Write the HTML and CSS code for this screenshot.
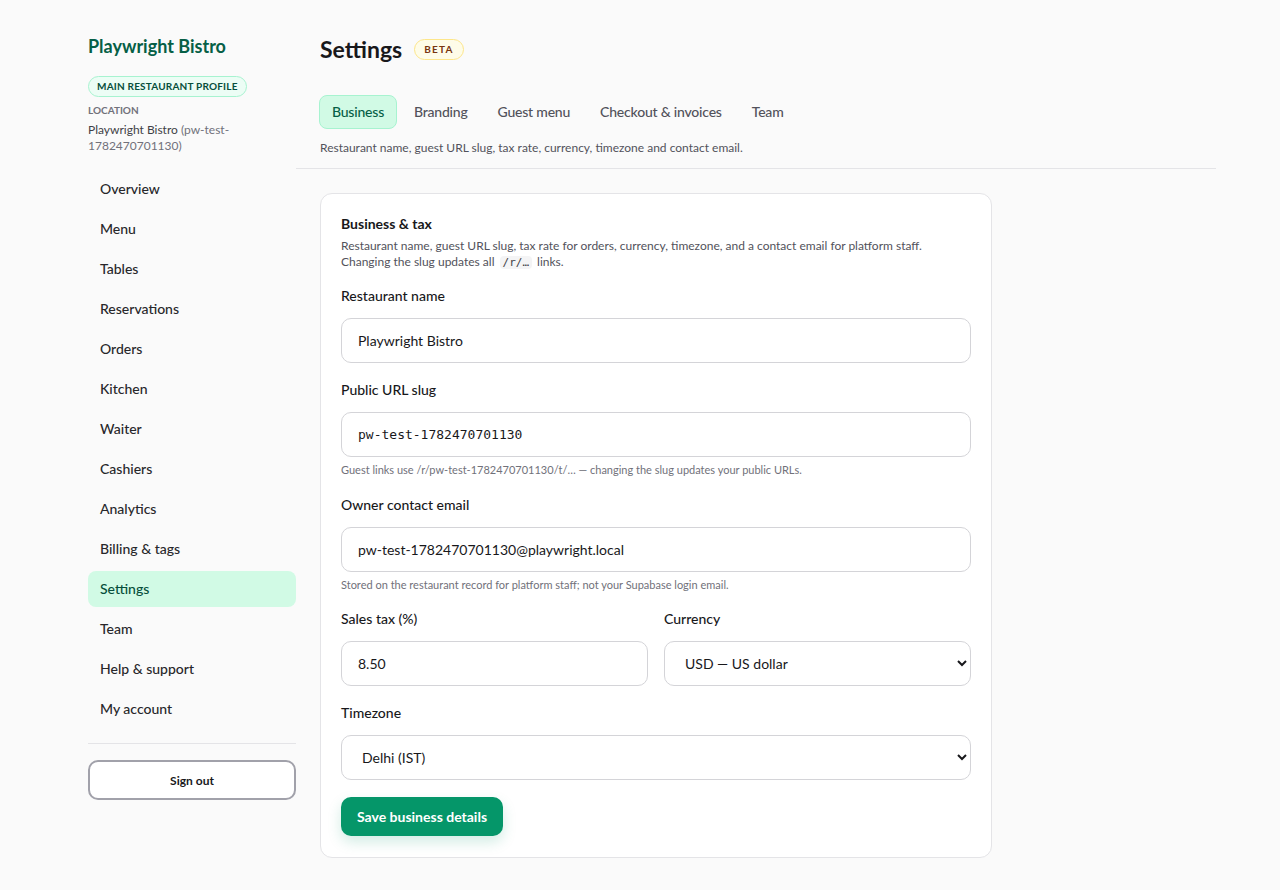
FILE: index.html
```html
<!DOCTYPE html>
<html lang="en">
<head>
  <meta charset="UTF-8" />
  <meta name="viewport" content="width=device-width, initial-scale=1" />
  <title>Settings · Playwright Bistro</title>
  <link rel="stylesheet" href="styles.css">
</head>
<body>

  <div class="layout">
    <aside class="sidebar">
      <div class="brand">Playwright Bistro</div>
      <span class="profile-badge">Main restaurant profile</span>
      <div class="loc-label">Location</div>
      <div class="loc-name">Playwright Bistro <span class="muted">(pw-test-1782470701130)</span></div>

      <nav class="nav">
        <a href="#">Overview</a>
        <a href="#">Menu</a>
        <a href="#">Tables</a>
        <a href="#">Reservations</a>
        <a href="#">Orders</a>
        <a href="#">Kitchen</a>
        <a href="#">Waiter</a>
        <a href="#">Cashiers</a>
        <a href="#">Analytics</a>
        <a href="#">Billing &amp; tags</a>
        <a href="#" class="active">Settings</a>
        <a href="#">Team</a>
        <a href="#">Help &amp; support</a>
        <a href="#">My account</a>
      </nav>

      <div class="sidebar-foot">
        <button class="signout">Sign out</button>
      </div>
    </aside>

    <main class="main">
      <header class="page-head">
        <div class="title-row">
          <h1>Settings</h1>
          <span class="beta">Beta</span>
        </div>
        <div class="tabs">
          <a href="#" class="tab active">Business</a>
          <a href="#" class="tab">Branding</a>
          <a href="#" class="tab">Guest menu</a>
          <a href="#" class="tab">Checkout &amp; invoices</a>
          <a href="#" class="tab">Team</a>
        </div>
        <p class="tab-desc">Restaurant name, guest URL slug, tax rate, currency, timezone and contact email.</p>
      </header>

      <section class="card">
        <h2>Business &amp; tax</h2>
        <p class="card-desc">Restaurant name, guest URL slug, tax rate for orders, currency, timezone, and a contact email for platform staff. Changing the slug updates all <code>/r/…</code> links.</p>

        <div class="field">
          <label for="name">Restaurant name</label>
          <input id="name" type="text" value="Playwright Bistro">
        </div>

        <div class="field">
          <label for="slug">Public URL slug</label>
          <input id="slug" class="mono" type="text" value="pw-test-1782470701130">
          <p class="hint">Guest links use /r/pw-test-1782470701130/t/… — changing the slug updates your public URLs.</p>
        </div>

        <div class="field">
          <label for="email">Owner contact email</label>
          <input id="email" type="email" value="pw-test-1782470701130@playwright.local">
          <p class="hint">Stored on the restaurant record for platform staff; not your Supabase login email.</p>
        </div>

        <div class="field-row">
          <div class="field">
            <label for="tax">Sales tax (%)</label>
            <input id="tax" type="text" value="8.50">
          </div>
          <div class="field">
            <label for="currency">Currency</label>
            <select id="currency">
              <option>USD — US dollar</option>
              <option>EUR — Euro</option>
              <option>INR — Indian rupee</option>
            </select>
          </div>
        </div>

        <div class="field">
          <label for="tz">Timezone</label>
          <select id="tz">
            <option>Delhi (IST)</option>
            <option>London (GMT)</option>
            <option>New York (EST)</option>
          </select>
        </div>

        <button class="save">Save business details</button>
      </section>
    </main>
  </div>

</body>
</html>
```

FILE: styles.css
```css
* {
  box-sizing: border-box;
}

body {
  margin: 0;
  font-family: Lato, "Noto Sans", sans-serif;
  background: #fafafa;
  color: #18181b;
}

a {
  text-decoration: none;
  color: inherit;
}

.layout {
  display: flex;
  padding: 34px 64px 32px 88px;
}

/* Sidebar */
.sidebar {
  width: 208px;
  flex: 0 0 208px;
  display: flex;
  flex-direction: column;
}

.brand {
  font-size: 18px;
  line-height: 24px;
  font-weight: 700;
  color: #065f46;
}

.profile-badge {
  align-self: flex-start;
  margin-top: 18px;
  padding: 3px 8px;
  font-size: 10px;
  line-height: 13px;
  font-weight: 700;
  text-transform: uppercase;
  letter-spacing: 0.02em;
  color: #064e3b;
  background: #ecfdf5;
  border: 1px solid #a7f3d0;
  border-radius: 999px;
}

.loc-label {
  margin-top: 6px;
  font-size: 10px;
  line-height: 14px;
  font-weight: 700;
  text-transform: uppercase;
  color: #71717a;
}

.loc-name {
  margin-top: 5px;
  font-size: 12px;
  line-height: 16px;
  color: #3f3f46;
}

.muted {
  color: #71717a;
}

.nav {
  margin-top: 17px;
  display: flex;
  flex-direction: column;
  gap: 4px;
}

.nav a {
  display: block;
  height: 36px;
  line-height: 36px;
  padding: 0 12px;
  font-size: 14px;
  font-weight: 500;
  color: #27272a;
  border-radius: 8px;
}

.nav a.active {
  background: #d1fae5;
  color: #064e3b;
}

.sidebar-foot {
  margin-top: 16px;
  padding-top: 16px;
  border-top: 1px solid #e4e4e7;
}

.signout {
  width: 100%;
  height: 40px;
  font-family: inherit;
  font-size: 12px;
  font-weight: 700;
  color: #18181b;
  background: #fff;
  border: 2px solid #a1a1aa;
  border-radius: 10px;
  cursor: pointer;
}

/* Main column */
.main {
  flex: 1;
  min-width: 0;
}

.page-head {
  padding: 1px 24px 12px;
  border-bottom: 1px solid #e4e4e7;
}

.title-row {
  display: flex;
  align-items: center;
  gap: 12px;
}

.title-row h1 {
  margin: 0;
  font-size: 23px;
  line-height: 28px;
  font-weight: 700;
  color: #18181b;
}

.beta {
  padding: 3px 9px;
  font-size: 10px;
  line-height: 13px;
  font-weight: 700;
  letter-spacing: 0.12em;
  text-transform: uppercase;
  color: #78350f;
  background: #fefce8;
  border: 1px solid #fde68a;
  border-radius: 999px;
}

.tabs {
  display: flex;
  gap: 4px;
  margin: 32px 0 0 -1px;
}

.tab {
  height: 34px;
  line-height: 32px;
  padding: 0 12px;
  font-size: 14px;
  font-weight: 500;
  letter-spacing: -0.015em;
  color: #52525b;
  border: 1px solid transparent;
  border-radius: 8px;
}

.tab.active {
  background: #d1fae5;
  border-color: #a7f3d0;
  color: #065f46;
}

.tab-desc {
  margin: 11px 0 0;
  font-size: 12px;
  line-height: 16px;
  color: #52525b;
}

/* Business card */
.card {
  margin: 24px 0 0 24px;
  width: 672px;
  padding: 20px 20px 21px;
  background: #fff;
  border: 1px solid #e4e4e7;
  border-radius: 12px;
}

.card h2 {
  margin: 0;
  font-size: 14px;
  line-height: 20px;
  font-weight: 700;
}

.card-desc {
  margin: 4px 0 0;
  font-size: 12px;
  line-height: 16px;
  color: #52525b;
}

.card-desc code {
  font-family: "DejaVu Sans Mono", monospace;
  font-size: 11px;
  margin: 0 2px;
  padding: 0 3px;
  background: #f4f4f5;
  border-radius: 4px;
  color: #3f3f46;
}

.field {
  display: flex;
  flex-direction: column;
}

/* vertical rhythm between the card's form blocks */
.card > .card-desc + .field {
  margin-top: 15px;
}

.card > .field + .field,
.card > .field-row + .field {
  margin-top: 17px;
}

.card > .field + .field-row {
  margin-top: 16px;
}

.field label {
  font-size: 14px;
  line-height: 20px;
  font-weight: 500;
  color: #18181b;
  margin-bottom: 12px;
}

.field input,
.field select {
  height: 45px;
  width: 100%;
  padding: 0 16px;
  font-family: inherit;
  font-size: 14px;
  color: #18181b;
  background: #fff;
  border: 1px solid #d4d4d8;
  border-radius: 10px;
  outline: none;
}

.field select {
  padding-right: 8px;
}

.field input.mono {
  font-family: "DejaVu Sans Mono", monospace;
  font-size: 13px;
}

.hint {
  margin: 5px 0 0;
  font-size: 11px;
  line-height: 16px;
  color: #71717a;
}

.field-row {
  display: grid;
  grid-template-columns: 1fr 1fr;
  gap: 16px;
}

.save {
  margin-top: 17px;
  height: 39px;
  padding: 0 16px;
  font-family: inherit;
  font-size: 14px;
  font-weight: 700;
  color: #fff;
  background: #059669;
  border: none;
  border-radius: 10px;
  box-shadow: 0 6px 14px rgba(5, 150, 105, 0.18);
  cursor: pointer;
}
```
